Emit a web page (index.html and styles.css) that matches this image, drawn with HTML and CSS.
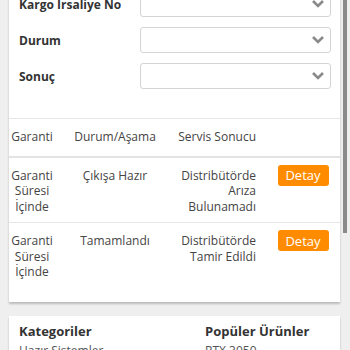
FILE: index.html
```html
<!DOCTYPE html>
<html lang="tr">
<head>
    <meta charset="UTF-8">
    <meta name="viewport" content="width=device-width, initial-scale=1.0">
    <title>Servis Takip</title>
    <link rel="stylesheet" href="styles.css">
</head>
<body>

<div class="page">
    <div class="card service">
        <div class="form-row">
            <label>Kargo İrsaliye No</label>
            <div class="select"><svg viewBox="0 0 14 10"><polyline points="2,2 7,7 12,2"/></svg></div>
        </div>
        <div class="form-row">
            <label>Durum</label>
            <div class="select"><svg viewBox="0 0 14 10"><polyline points="2,2 7,7 12,2"/></svg></div>
        </div>
        <div class="form-row">
            <label>Sonuç</label>
            <div class="select"><svg viewBox="0 0 14 10"><polyline points="2,2 7,7 12,2"/></svg></div>
        </div>

        <table class="results">
            <thead>
                <tr>
                    <th class="c-warranty">Garanti</th>
                    <th class="c-status">Durum/Aşama</th>
                    <th class="c-result">Servis Sonucu</th>
                    <th class="c-action"></th>
                </tr>
            </thead>
            <tbody>
                <tr>
                    <td class="c-warranty">Garanti Süresi İçinde</td>
                    <td class="c-status">Çıkışa Hazır</td>
                    <td class="c-result">Distribütörde<br>Arıza<br>Bulunamadı</td>
                    <td class="c-action"><button>Detay</button></td>
                </tr>
                <tr>
                    <td class="c-warranty">Garanti Süresi İçinde</td>
                    <td class="c-status">Tamamlandı</td>
                    <td class="c-result">Distribütörde<br>Tamir Edildi</td>
                    <td class="c-action"><button>Detay</button></td>
                </tr>
            </tbody>
        </table>
    </div>

    <div class="card links">
        <div class="link-col">
            <h3>Kategoriler</h3>
            <p>Hazır Sistemler</p>
        </div>
        <div class="link-col">
            <h3>Popüler Ürünler</h3>
            <p>RTX 3050</p>
        </div>
    </div>
</div>

<div class="scroll-thumb"></div>

</body>
</html>
```

FILE: styles.css
```css
* {
    box-sizing: border-box;
    margin: 0;
    padding: 0;
}

body {
    font-family: 'Open Sans', 'Noto Sans', sans-serif;
    background-color: #efefef;
    color: #444;
    height: 350px;
    overflow: hidden;
}

.page {
    padding: 0 10px 0 9px;
}

.card {
    background-color: #fff;
    box-shadow: 0 2px 2px rgba(0, 0, 0, 0.22);
}

.service {
    margin-top: -19px;
    padding: 10px 0 14px;
}

.form-row {
    display: flex;
    align-items: center;
    height: 26px;
    margin: 0 9px 10px 10px;
}

.form-row label {
    width: 121px;
    font-size: 12px;
    font-weight: bold;
    color: #333;
}

.select {
    flex: 1;
    height: 26px;
    border: 1px solid #d4d4d4;
    border-radius: 3px;
    display: flex;
    justify-content: flex-end;
    align-items: center;
    padding-right: 5px;
}

.select svg {
    width: 14px;
    height: 10px;
    fill: none;
    stroke: #8a8a8a;
    stroke-width: 2.6;
}

.results {
    width: 100%;
    margin-top: 29px;
    border-collapse: collapse;
    font-size: 12px;
    line-height: 15.5px;
}

.results th,
.results td {
    font-weight: normal;
    vertical-align: top;
    padding: 10px 0 8px;
    border-top: 1px solid #e6e6e6;
}

.results th {
    padding: 10px 0 11px;
}

.results thead tr {
    border-bottom: 2px solid #e3e3e3;
}

.c-warranty {
    width: 46px;
    text-align: center;
}

.c-status {
    width: 120px;
    text-align: center;
}

.c-result {
    width: 87px;
    text-align: right;
    padding-right: 6px !important;
}

.c-action {
    text-align: center;
    padding-left: 4px !important;
}

.c-action button {
    margin-top: -3px;
    width: 51px;
    height: 21px;
    background-color: #ff8c00;
    color: #fff;
    border: none;
    border-radius: 3px;
    font-family: inherit;
    font-size: 13px;
}

.links {
    margin-top: 14px;
    display: grid;
    grid-template-columns: 186px 1fr;
    padding: 7px 10px 0;
    height: 60px;
}

.link-col h3 {
    font-size: 13px;
    color: #333;
    line-height: 16px;
}

.link-col p {
    margin-top: 4px;
    font-size: 12px;
    line-height: 16px;
    color: #555;
}

.scroll-thumb {
    position: absolute;
    top: 0;
    right: 3px;
    width: 4px;
    height: 233px;
    background-color: #8a8a8a;
}
```
